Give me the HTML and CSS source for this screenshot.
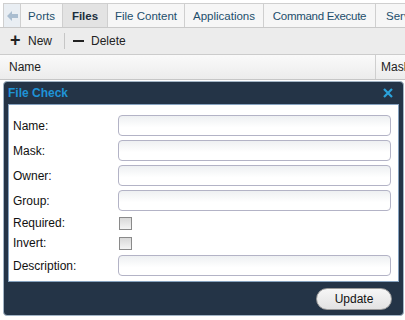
FILE: index.html
```html
<!DOCTYPE html>
<html lang="en">
<head>
    <meta charset="UTF-8">
    <title>Files</title>
    <link rel="stylesheet" href="styles.css">
</head>
<body>
    <div class="tabbar">
        <div class="tab back"><svg width="11" height="10" viewBox="0 0 11 10"><path d="M0 5 L5 0 L5 3 L11 3 L11 7 L5 7 L5 10 Z" fill="#a9bdd0"/></svg></div>
        <div class="tab t-ports">Ports</div>
        <div class="tab t-files active">Files</div>
        <div class="tab t-content">File Content</div>
        <div class="tab t-apps">Applications</div>
        <div class="tab t-cmd">Command Execute</div>
        <div class="tab t-serv">Services</div>
    </div>
    <div class="toolbar">
        <div class="tool"><span class="plus">+</span>New</div>
        <div class="sep"></div>
        <div class="tool"><span class="minus"></span>Delete</div>
    </div>
    <div class="gridhead">
        <div class="col name">Name</div>
        <div class="col mask">Mask</div>
    </div>

    <div class="dialog">
        <div class="dlgtitle">
            <span>File Check</span>
            <svg class="close" width="10" height="10" viewBox="0 0 10 10"><path d="M1 1 L9 9 M9 1 L1 9" stroke="#2ba3dc" stroke-width="2.2"/></svg>
        </div>
        <div class="dlgbody">
            <label>Name:</label><div class="field"></div>
            <label>Mask:</label><div class="field"></div>
            <label>Owner:</label><div class="field"></div>
            <label>Group:</label><div class="field"></div>
            <label>Required:</label><div class="chk"></div>
            <label>Invert:</label><div class="chk"></div>
            <label>Description:</label><div class="field"></div>
        </div>
        <div class="dlgfoot">
            <button type="button" class="updatebtn">Update</button>
        </div>
    </div>
</body>
</html>
```

FILE: styles.css
```css
body {
    margin: 0;
    font-family: "Liberation Sans", Arial, sans-serif;
    font-size: 12px;
    background: #ffffff;
    width: 405px;
    height: 320px;
    overflow: hidden;
    position: relative;
}

.tabbar {
    display: flex;
    padding-top: 3px;
    height: 24px;
    border-bottom: 1px solid #c9c9c9;
    white-space: nowrap;
    overflow: hidden;
}

.tab {
    display: flex;
    align-items: center;
    justify-content: center;
    box-sizing: border-box;
    background: #f6f6f6;
    border: 1px solid #cfcfcf;
    border-bottom: none;
    margin-left: -1px;
    color: #1d4e6c;
    flex-shrink: 0;
    font-size: 11.5px;
}

.tab.back {
    margin-left: 3px;
    width: 18px;
    background: #e9eef3;
}

.t-ports { width: 43px; }
.t-files { width: 46px; }
.t-content { width: 78px; }
.t-apps { width: 80px; }
.t-cmd { width: 113px; letter-spacing: -0.3px; }
.t-serv { width: 60px; justify-content: flex-start; padding-left: 10px; }

.tab.active {
    background: #e3e3e3;
    font-weight: bold;
    color: #1a2d3c;
}

.toolbar {
    display: flex;
    align-items: center;
    height: 26px;
    background: #ececec;
    border-bottom: 1px solid #cccccc;
    padding-left: 10px;
}

.tool {
    display: flex;
    align-items: center;
    color: #222;
}

.plus {
    font-size: 18px;
    font-weight: bold;
    width: 18px;
    margin-top: -2px;
}

.minus {
    display: inline-block;
    width: 11px;
    height: 2px;
    background: #222;
    margin-right: 7px;
}

.sep {
    width: 1px;
    height: 16px;
    background: #c6c6c6;
    margin: 0 8px 0 12px;
}

.gridhead {
    display: flex;
    height: 24px;
    background: linear-gradient(#fafafa, #ececec);
    border-bottom: 1px solid #c6c6c6;
}

.col {
    display: flex;
    align-items: center;
    color: #222;
    flex-shrink: 0;
}

.col.name {
    width: 366px;
    padding-left: 9px;
    border-right: 1px solid #cfcfcf;
}

.col.mask {
    padding-left: 5px;
}

.dialog {
    position: absolute;
    left: 3px;
    top: 81px;
    width: 399px;
    height: 233px;
    background: #243447;
    border: 1px solid #a3b5c6;
    border-radius: 4px;
    display: flex;
    flex-direction: column;
}

.dlgtitle {
    height: 22px;
    display: flex;
    align-items: center;
    justify-content: space-between;
    padding: 0 10px 0 4px;
    color: #1f93d6;
    font-weight: bold;
}

.dlgbody {
    margin: 0 4px;
    background: #ffffff;
    border: 1px solid #86a2bf;
    height: 166px;
    padding: 10px 7px 0 4px;
    display: grid;
    grid-template-columns: 105px 1fr;
    grid-template-rows: 21px 21px 21px 21px 16px 16px 21px;
    row-gap: 4px;
    align-items: center;
}

label {
    color: #111;
}

.field {
    height: 19px;
    border: 1px solid #b3b3c6;
    border-radius: 4px;
    background: linear-gradient(#eef0f2, #ffffff 60%);
}

.chk {
    width: 11px;
    height: 11px;
    margin-left: 1px;
    border: 1px solid #8a8a8a;
    background: linear-gradient(#d8d8d8, #f4f4f4);
}

.dlgfoot {
    flex: 1;
    display: flex;
    align-items: center;
    justify-content: flex-end;
    padding-right: 11px;
}

.updatebtn {
    width: 76px;
    height: 22px;
    border: 1px solid #9a9a9a;
    border-radius: 11px;
    background: linear-gradient(#f6f6f6, #e2e2e2);
    font-family: "Liberation Sans", Arial, sans-serif;
    font-size: 12px;
    color: #111;
    padding: 0;
}
```
